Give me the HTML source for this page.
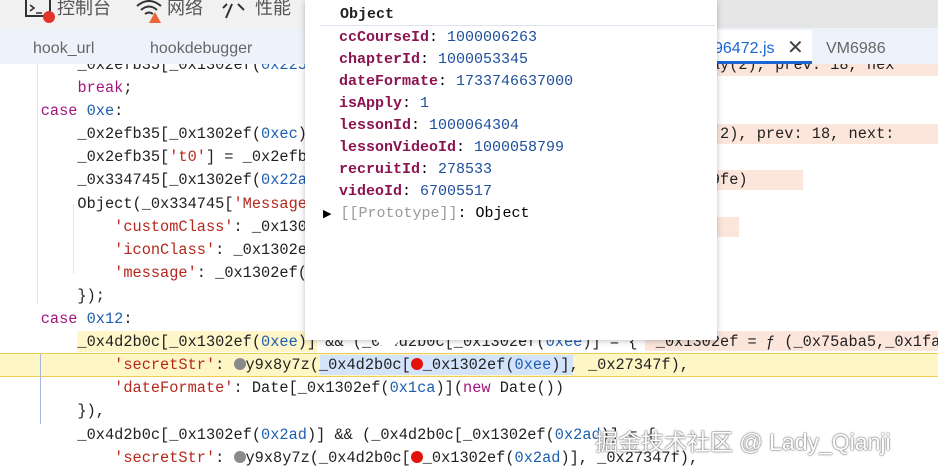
<!DOCTYPE html>
<html><head><meta charset="utf-8"><style>
body{margin:0;width:938px;height:475px;overflow:hidden;background:#fff;position:relative;font-family:"Liberation Sans","Noto Sans CJK SC",sans-serif}
.tb{position:absolute;left:0;top:0;width:938px;height:28px;background:#f1f1f1;z-index:2}
.tbt{position:absolute;top:-6px;font-size:18px;color:#555}
.tabs{position:absolute;left:0;top:28px;width:938px;height:36px;background:#eef3fb;z-index:2}
.tab{position:absolute;top:12px;font-size:16px;color:#666}
.code{position:absolute;left:4px;top:54px;font-family:"Liberation Mono",monospace;font-size:15.3px;line-height:23.1px;white-space:pre;color:#222}
.k{color:#a3157f}.n{color:#1d5fb0}.s{color:#b5281c}
.hl{position:absolute;left:0;width:938px;height:22px;background:#fff6c6;border-top:1px solid #f0cc55;border-bottom:1px solid #f0cc55}
.sal{position:absolute;height:20px;background:#fce6dc}
.pop{position:absolute;left:305px;top:0;width:412px;height:340px;background:#fff;box-shadow:0 1px 6px rgba(0,0,0,.25);font-family:"Liberation Mono",monospace;font-size:15px;line-height:22px;z-index:3}
.pop .r{position:absolute;left:34px;white-space:pre}
.key{color:#8b1350;font-weight:bold}.v{color:#1d4f9c}
.dot{display:inline-block;width:12px;height:12px;border-radius:50%;vertical-align:-1px}
</style></head><body>
<div class="tb">
<svg style="position:absolute;left:25px;top:0" width="30" height="24"><rect x="1" y="-3" width="24" height="19" fill="none" stroke="#333" stroke-width="2"/><path d="M5 5l4 3-4 3M11 13h6" stroke="#333" stroke-width="1.6" fill="none"/><circle cx="24" cy="17" r="6" fill="#e0342b"/></svg>
<span class="tbt" style="left:57px">控制台</span>
<svg style="position:absolute;left:135px;top:0" width="30" height="24"><path d="M2 6q12-10 24 0M6 10q8-7 16 0M10 14q4-3 8 0" stroke="#333" stroke-width="2" fill="none"/><path d="M20 12l6 11h-12z" fill="#e8683a"/></svg>
<span class="tbt" style="left:167px">网络</span>
<svg style="position:absolute;left:220px;top:0" width="30" height="24"><path d="M3 8l4-4M12 4l-6 14M18 4l6 6" stroke="#333" stroke-width="2" fill="none"/></svg>
<span class="tbt" style="left:255px">性能</span>
<div style="position:absolute;left:717px;top:0;width:221px;height:28px;background:#e6e6e6"></div>
</div>
<div class="tabs">
<span class="tab" style="left:33px">hook_url</span>
<span class="tab" style="left:150px">hookdebugger</span>
<div style="position:absolute;left:700px;top:2px;width:112px;height:34px;background:#fff;border-bottom:3px solid #1a66d2;box-sizing:border-box"></div>
<span class="tab" style="left:690px;color:#1a66d2">VM96472.js</span>
<span class="tab" style="left:787px;color:#444;font-size:20px;top:7px">✕</span>
<span class="tab" style="left:826px">VM6986</span>
</div>
<div style="position:absolute;left:0;top:64px;width:938px;height:411px;overflow:hidden">
<div class="sal" style="left:717px;top:-8px;width:221px"></div>
<div class="sal" style="left:717px;top:60px;width:221px"></div>
<div class="sal" style="left:717px;top:106px;width:86px"></div>
<div class="sal" style="left:717px;top:153px;width:22px"></div>
<div style="position:absolute;left:77px;top:267px;width:240px;height:21px;background:#fff7c9"></div>
<div class="sal" style="left:645px;top:267px;width:293px"></div>
<div class="hl" style="top:289px"></div>
<div style="position:absolute;left:320px;top:291px;width:253px;height:20px;background:#d3e3fb"></div>
<div style="position:absolute;left:37px;top:0;width:1px;height:240px;background:#dde6f3"></div>
<div style="position:absolute;left:73px;top:140px;width:1px;height:70px;background:#dde6f3"></div>
<div style="position:absolute;left:40px;top:290px;width:1px;height:70px;background:#9fb9e0"></div>
</div>
<div class="code">        _0x2efb35[_0x1302ef(<span class="n">0x225</span>)]                                     : Array(2), prev: 18, nex
        <span class="k">break</span>;
    <span class="k">case</span> <span class="n">0xe</span>:
        _0x2efb35[_0x1302ef(<span class="n">0xec</span>)]                                      Array(2), prev: 18, next:
        _0x2efb35[<span class="s">'t0'</span>] = _0x2efb
        _0x334745[_0x1302ef(<span class="n">0x22a</span>)                                      0x1fa9fe)
        Object(_0x334745[<span class="s">'Message</span>
            <span class="s">'customClass'</span>: _0x1302                                 e)
            <span class="s">'iconClass'</span>: _0x1302ef
            <span class="s">'message'</span>: _0x1302ef(0
        });
    <span class="k">case</span> <span class="n">0x12</span>:
        _0x4d2b0c[_0x1302ef(<span class="n">0xee</span>)] &amp;&amp; (_0x4d2b0c[_0x1302ef(<span class="n">0xee</span>)] = {  _0x1302ef = ƒ (_0x75aba5,_0x1fa9
            <span class="s">'secretStr'</span>: <span class="dot" style="background:#8a8a8a"></span>y9x8y7z(_0x4d2b0c[<span class="dot" style="background:#e3130b"></span>_0x1302ef(<span class="n">0xee</span>)], _0x27347f),
            <span class="s">'dateFormate'</span>: Date[_0x1302ef(<span class="n">0x1ca</span>)](<span class="k">new</span> Date())
        }),
        _0x4d2b0c[_0x1302ef(<span class="n">0x2ad</span>)] &amp;&amp; (_0x4d2b0c[_0x1302ef(<span class="n">0x2ad</span>)] = {
            <span class="s">'secretStr'</span>: <span class="dot" style="background:#8a8a8a"></span>y9x8y7z(_0x4d2b0c[<span class="dot" style="background:#e3130b"></span>_0x1302ef(<span class="n">0x2ad</span>)], _0x27347f),
</div>
<div class="pop">
<div class="r" style="top:4px;left:35px;font-weight:bold;color:#222">Object</div>
<div style="position:absolute;left:15px;top:25px;width:395px;height:1px;background:#dde3ee"></div>
<div class="r" style="top:27px"><span class="key">ccCourseId</span>: <span class="v">1000006263</span></div>
<div class="r" style="top:49px"><span class="key">chapterId</span>: <span class="v">1000053345</span></div>
<div class="r" style="top:71px"><span class="key">dateFormate</span>: <span class="v">1733746637000</span></div>
<div class="r" style="top:93px"><span class="key">isApply</span>: <span class="v">1</span></div>
<div class="r" style="top:115px"><span class="key">lessonId</span>: <span class="v">1000064304</span></div>
<div class="r" style="top:137px"><span class="key">lessonVideoId</span>: <span class="v">1000058799</span></div>
<div class="r" style="top:159px"><span class="key">recruitId</span>: <span class="v">278533</span></div>
<div class="r" style="top:181px"><span class="key">videoId</span>: <span class="v">67005517</span></div>
<div class="r" style="top:203px;left:18px"><span style="font-size:11px">▶</span> <span style="color:#999">[[Prototype]]</span>: Object</div>
</div>
<svg style="position:absolute;left:375px;top:339px;z-index:3" width="26" height="14"><path d="M0 0L13 13L26 0" fill="#fff"/></svg>
<div style="position:absolute;left:595px;top:423px;font-size:23px;color:#fff;text-shadow:0 0 2px #666,0 0 1px #444;white-space:nowrap;z-index:4">掘金技术社区 @ Lady_Qianji</div>
</body></html>
